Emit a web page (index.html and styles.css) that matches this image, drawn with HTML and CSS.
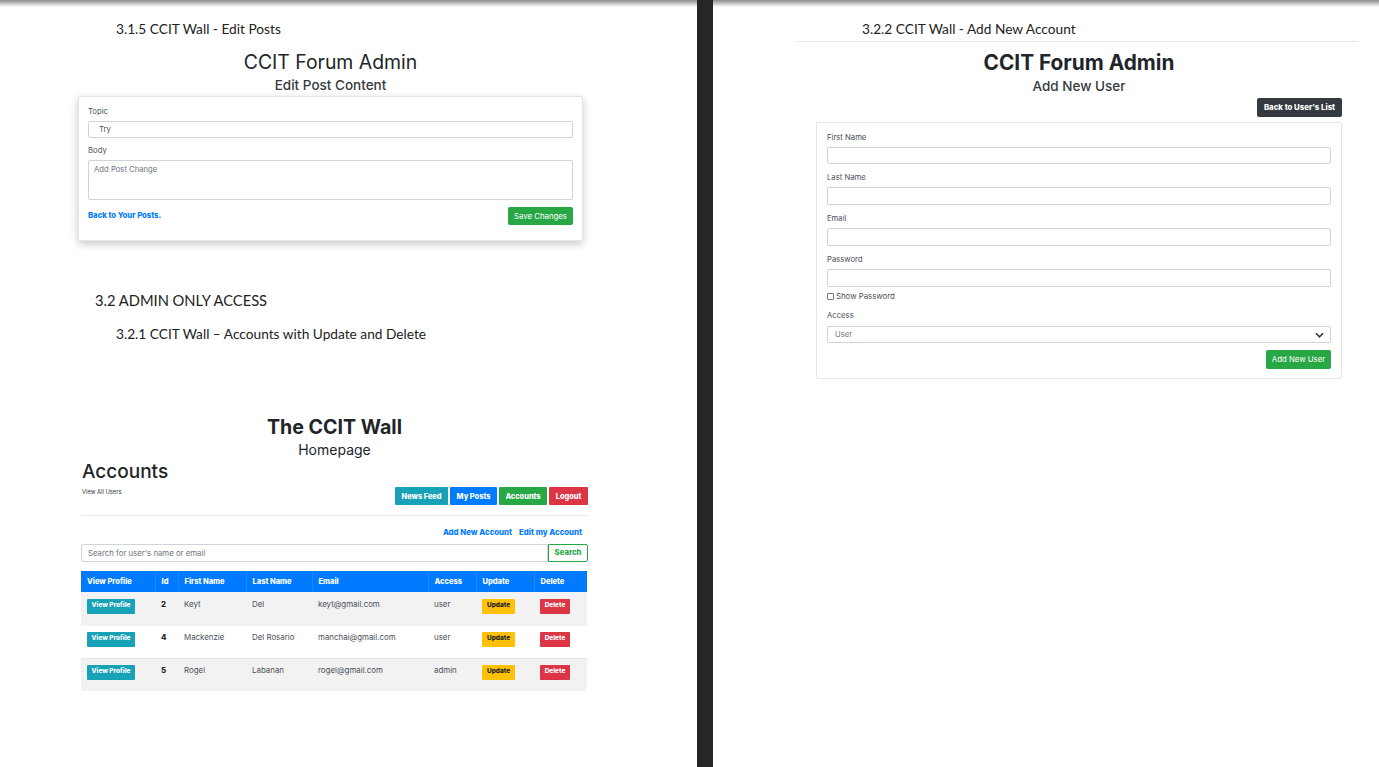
FILE: index.html
```html
<!DOCTYPE html>
<html lang="en">
<head>
<meta charset="utf-8">
<title>CCIT Wall</title>
<link rel="stylesheet" href="styles.css">
</head>
<body>
<div class="doc">
  <section class="page page-left">
    <p class="doc-h3 h-edit">3.1.5 CCIT Wall - Edit Posts</p>
    <div class="shot edit-shot">
      <h1 class="title">CCIT Forum Admin</h1>
      <h2 class="subtitle">Edit Post Content</h2>
      <form class="card shadow-card">
        <div class="label">Topic</div>
        <div class="input input-topic">Try</div>
        <div class="label label-body">Body</div>
        <div class="textarea">Add Post Change</div>
        <div class="form-foot">
          <a class="back-link">Back to Your Posts.</a>
          <span class="btn green">Save Changes</span>
        </div>
      </form>
    </div>
    <p class="doc-h2">3.2 ADMIN ONLY ACCESS</p>
    <p class="doc-h3 h-accounts">3.2.1 CCIT Wall – Accounts with Update and Delete</p>
    <div class="shot wall-shot">
      <h1 class="title bold wall-title">The CCIT Wall</h1>
      <h2 class="subtitle wall-sub">Homepage</h2>
      <div class="wall-head">
        <div>
          <div class="accounts">Accounts</div>
          <div class="view-all">View All Users</div>
        </div>
        <nav class="wall-nav">
          <span class="nav-btn teal w53">News Feed</span>
          <span class="nav-btn blue w47">My Posts</span>
          <span class="nav-btn green w48">Accounts</span>
          <span class="nav-btn red w39">Logout</span>
        </nav>
      </div>
      <hr class="rule">
      <div class="wall-links"><a>Add New Account</a><a>Edit my Account</a></div>
      <div class="search">
        <div class="search-input">Search for user's name or email</div>
        <span class="search-btn">Search</span>
      </div>
      <table class="accounts-table">
        <colgroup><col class="c1"><col class="c2"><col class="c3"><col class="c4"><col class="c5"><col class="c6"><col class="c7"><col class="c8"></colgroup>
        <thead>
          <tr><th>View Profile</th><th>Id</th><th>First Name</th><th>Last Name</th><th>Email</th><th>Access</th><th>Update</th><th>Delete</th></tr>
        </thead>
        <tbody>
          <tr class="odd r1"><td><span class="mini teal">View Profile</span></td><td class="id">2</td><td>Keyt</td><td>Del</td><td>keyt@gmail.com</td><td>user</td><td><span class="mini yellow">Update</span></td><td><span class="mini red">Delete</span></td></tr>
          <tr class="r2"><td><span class="mini teal">View Profile</span></td><td class="id">4</td><td>Mackenzie</td><td>Del Rosario</td><td>manchai@gmail.com</td><td>user</td><td><span class="mini yellow">Update</span></td><td><span class="mini red">Delete</span></td></tr>
          <tr class="odd r3"><td><span class="mini teal">View Profile</span></td><td class="id">5</td><td>Rogel</td><td>Labanan</td><td>rogel@gmail.com</td><td>admin</td><td><span class="mini yellow">Update</span></td><td><span class="mini red">Delete</span></td></tr>
        </tbody>
      </table>
    </div>
  </section>
  <div class="gutter"></div>
  <section class="page page-right">
    <p class="doc-h3 h-add">3.2.2 CCIT Wall - Add New Account</p>
    <div class="add-shot">
      <h1 class="title bold">CCIT Forum Admin</h1>
      <h2 class="subtitle add-sub">Add New User</h2>
      <div class="back-row"><span class="btn dark">Back to User's List</span></div>
      <form class="card add-card">
        <div class="label">First Name</div>
        <div class="input"></div>
        <div class="label">Last Name</div>
        <div class="input tall"></div>
        <div class="label">Email</div>
        <div class="input tall"></div>
        <div class="label">Password</div>
        <div class="input tall"></div>
        <div class="show"><span class="check"></span>Show Password</div>
        <div class="label label-access">Access</div>
        <div class="select">User
          <svg class="chev" viewBox="0 0 10 6" width="9" height="6"><path d="M1 1l4 4 4-4" fill="none" stroke="#343a40" stroke-width="1.8"/></svg>
        </div>
        <div class="add-foot"><span class="btn green add-btn">Add New User</span></div>
      </form>
    </div>
  </section>
</div>
<div class="top-shade"></div>
</body>
</html>
```
FILE: styles.css
```css
* { box-sizing: border-box; }
html, body { margin: 0; height: 767px; overflow: hidden; background: #fff; }
body { font-family: Inter, "Liberation Sans", sans-serif; color: #212529; position: relative; }
.top-shade { position: absolute; top: 0; left: 0; right: 0; height: 7px; background: linear-gradient(#8a8a8a, #c4c4c4 50%, #ffffff); }
.doc { display: flex; height: 767px; }
.page { background: #fff; }
.page-left { width: 697px; }
.gutter { width: 16px; background: #262626; position: relative; z-index: 1; }
.page-right { flex: 1; }
p { margin: 0; }
h1, h2 { margin: 0; text-align: center; }

.doc-h3, .doc-h2 { font-family: Lato, "Open Sans", sans-serif; font-weight: 400; color: #222; white-space: nowrap; }
.doc-h3 { font-size: 13.7px; line-height: 18px; }
.doc-h2 { font-size: 14.7px; line-height: 20px; margin: 49px 0 0 95px; }
.h-edit { margin: 20px 0 0 116px; }
.h-accounts { margin: 15px 0 0 116px; }
.h-add { margin: 20px 0 0 149px; }

.edit-shot { margin: 0 0 0 78px; width: 505px; }
.title { font-size: 19.4px; line-height: 26px; font-weight: 400; margin-top: 11px; color: #212529; }
.title.bold { font-weight: 700; }
.subtitle { font-size: 13.5px; line-height: 18px; font-weight: 500; margin-top: 1px; color: #343a40; }

.card { background: #fff; border: 1px solid #e3e5e8; border-radius: 2px; }
.shadow-card { margin-top: 2px; height: 145px; padding: 9px 9px 0; box-shadow: 0 3px 9px rgba(0,0,0,.22); }
.label { font-size: 7.7px; line-height: 11px; color: #495057; }
.input { height: 17px; margin-top: 4px; border: 1px solid #ced4da; border-radius: 2px; background: #fff; font-size: 7.7px; line-height: 15px; color: #495057; }
.input.tall { height: 18px; }
.input-topic { padding-left: 10px; }
.label-body { margin-top: 7px; }
.textarea { height: 40px; margin-top: 4px; padding: 3px 5px; border: 1px solid #ced4da; border-radius: 2px; font-size: 7.7px; line-height: 11px; color: #6c757d; }
.form-foot { display: flex; justify-content: space-between; align-items: flex-start; margin-top: 7px; }
.back-link { font-size: 7.7px; font-weight: 800; line-height: 18px; color: #007bff; }
.btn { display: inline-flex; align-items: center; justify-content: center; padding-bottom: 1px; font-size: 7.8px; color: #fff; border-radius: 2px; white-space: nowrap; }
.form-foot .btn { width: 65px; height: 18px; }
.green { background: #28a745; }
.teal { background: #17a2b8; }
.blue { background: #007bff; }
.red { background: #dc3545; }
.yellow { background: #ffc107; color: #212529 !important; }
.dark { background: #343a40; font-weight: 800; }

.wall-shot { margin: 71px 0 0 81px; width: 507px; }
.wall-title { margin-top: 0; line-height: 26px; font-size: 19.6px; }
.wall-sub { line-height: 18px; margin-top: 1px; font-weight: 400; font-size: 14px; color: #212529; }
.wall-head { display: flex; justify-content: space-between; align-items: flex-start; }
.accounts { font-size: 19px; line-height: 24px; font-weight: 500; margin: 1px 0 0 1px; }
.view-all { font-size: 5.8px; line-height: 8px; margin: 4px 0 0 1px; color: #343a40; }
.wall-nav { display: flex; gap: 2px; margin-top: 28px; }
.nav-btn { height: 18px; display: flex; align-items: center; justify-content: center; font-size: 7.4px; font-weight: 800; color: #fff; border-radius: 1px; white-space: nowrap; }
.w53 { width: 53px; } .w47 { width: 47px; } .w48 { width: 48px; } .w39 { width: 39px; }
.rule { border: 0; border-top: 1px solid #e9ecef; margin: 10px 0 0; }
.wall-links { display: flex; justify-content: flex-end; gap: 7px; padding-right: 6px; margin-top: 11px; font-size: 7.8px; font-weight: 800; line-height: 10px; color: #007bff; }
.search { display: flex; margin-top: 7px; height: 18px; }
.search-input { flex: 1; border: 1px solid #ced4da; border-radius: 2px 0 0 2px; padding-left: 6px; font-size: 7.8px; line-height: 16px; color: #6c757d; }
.search-btn { width: 40px; border: 1px solid #28a745; border-radius: 0 2px 2px 0; font-size: 7.7px; font-weight: 800; color: #28a745; text-align: center; line-height: 16px; }
.accounts-table { border-collapse: collapse; table-layout: fixed; width: 506px; margin-top: 9px; font-size: 7.9px; color: #495057; }
.c1 { width: 74px; } .c2 { width: 23px; } .c3 { width: 68px; } .c4 { width: 66px; } .c5 { width: 116px; } .c6 { width: 48px; } .c7 { width: 58px; } .c8 { width: 53px; }
th { background: #007bff; color: #fff; font-size: 7.5px; font-weight: 800; text-align: left; height: 21px; padding: 0 6px; border-left: 1px solid #1a88ff; white-space: nowrap; }
th:first-child { border-left: 0; }
td { padding: 6px 6px 0; vertical-align: top; line-height: 12px; white-space: nowrap; }
.r1 td { height: 34px; }
.r2 td { height: 32px; padding-top: 5px; border-bottom: 1px solid #e6e6e6; }
.r3 td { height: 33px; padding-top: 5px; }
.odd td { background: #f2f2f2; }
.id { font-weight: 800; color: #212529; }
.mini { display: inline-block; height: 15px; line-height: 13px; padding: 0 4px; border-radius: 1px; font-size: 6.5px; font-weight: 800; color: #fff; }
.mini.teal { width: 48px; text-align: center; padding: 0; }
.mini.yellow { width: 33px; text-align: center; padding: 0; }
.mini.red { width: 30px; text-align: center; padding: 0; }

.add-shot { margin: 3px 21px 0 84px; }
.add-shot::before { content: ""; display: block; border-top: 1px solid #e5e7ea; }
.add-shot .title { margin-top: 8px; line-height: 26px; font-size: 20.8px; padding-left: 3px; }
.add-sub { margin-top: 1px; padding-left: 3px; }
.back-row { display: flex; justify-content: flex-end; padding-right: 16px; margin-top: 3px; }
.btn.dark { width: 85px; height: 19px; }
.add-card { margin: 5px 16px 0 19px; height: 257px; padding: 9px 10px 0; }
.add-card .label { margin-top: 8px; }
.add-card .label:first-child { margin-top: 0; }
.add-card .input { margin-top: 4px; }
.show { display: flex; align-items: center; margin-top: 4px; font-size: 7.8px; line-height: 10px; color: #495057; }
.check { width: 7px; height: 7px; border: 1px solid #777; border-radius: 1px; margin-right: 2px; }
.add-card .label-access { margin-top: 9px; }
.select { display: flex; justify-content: space-between; align-items: center; height: 17px; margin-top: 5px; padding: 0 6px 0 7px; border: 1px solid #ced4da; border-radius: 2px; font-size: 7.7px; color: #6c757d; }
.add-foot { display: flex; justify-content: flex-end; margin-top: 7px; }
.add-btn { width: 65px; height: 19px; }
```
